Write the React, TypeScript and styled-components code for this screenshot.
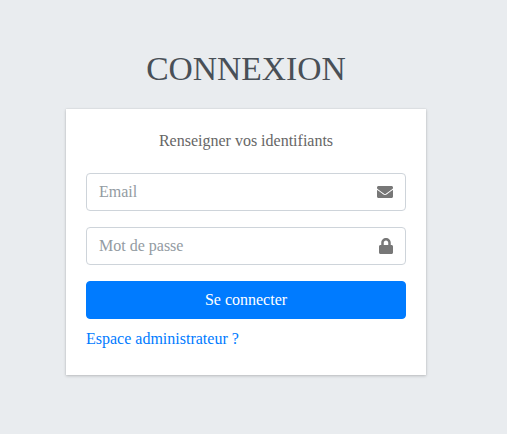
import React from "react";
import styled, { createGlobalStyle } from "styled-components";
import { FaEnvelope, FaLock } from "react-icons/fa";

const GlobalStyle = createGlobalStyle`
  *, *::before, *::after { box-sizing: border-box; }
  body {
    margin: 0;
    background: #e9ecef;
    color: #212529;
    font-family: "Liberation Serif", "Times New Roman", serif;
    font-size: 16px;
    line-height: 1.5;
  }
`;

const Page = styled.main`
  height: 434px;
  padding: 42px 81px 0 66px;
  overflow: hidden;
`;

const LoginBox = styled.section`
  width: 360px;
`;

const Logo = styled.h1`
  margin: 0 0 14px;
  color: #495057;
  font-size: 33.6px;
  font-weight: 300;
  line-height: 53px;
  text-align: center;
`;

const Card = styled.div`
  height: 266px;
  padding: 20px;
  background: #fff;
  box-shadow: 0 0 1px rgba(0, 0, 0, 0.125), 0 1px 3px rgba(0, 0, 0, 0.2);
`;

const Message = styled.p`
  margin: 0;
  padding-bottom: 20px;
  color: #666;
  text-align: center;
`;

const Field = styled.label`
  display: flex;
  height: 38px;
  margin-bottom: 16px;
  border: 1px solid #ced4da;
  border-radius: 4px;
`;

const Input = styled.input`
  flex: 1;
  min-width: 0;
  padding: 6px 12px;
  border: 0;
  outline: 0;
  background: transparent;
  color: #495057;
  font: inherit;
  &::placeholder { color: #939ba2; opacity: 1; }
`;

const Addon = styled.span`
  display: flex;
  align-items: center;
  padding: 0 12px;
  color: #777;
`;

const LockIcon = styled(FaLock)`
  width: 14px;
  height: 16px;
`;

const Submit = styled.button`
  display: block;
  width: 100%;
  height: 38px;
  border: 1px solid #007bff;
  border-radius: 4px;
  background: #007bff;
  color: #fff;
  font: inherit;
`;

const AdminLink = styled.a`
  display: block;
  margin-top: 8px;
  color: #007bff;
  text-decoration: none;
`;

export default function App() {
  return (
    <>
      <GlobalStyle />
      <Page>
        <LoginBox>
          <Logo>CONNEXION</Logo>
          <Card>
            <Message>Renseigner vos identifiants</Message>
            <form>
              <Field>
                <Input type="email" placeholder="Email" />
                <Addon><FaEnvelope size={16} /></Addon>
              </Field>
              <Field>
                <Input type="password" placeholder="Mot de passe" />
                <Addon><LockIcon /></Addon>
              </Field>
              <Submit type="button">Se connecter</Submit>
            </form>
            <AdminLink href="#">Espace administrateur ?</AdminLink>
          </Card>
        </LoginBox>
      </Page>
    </>
  );
}
